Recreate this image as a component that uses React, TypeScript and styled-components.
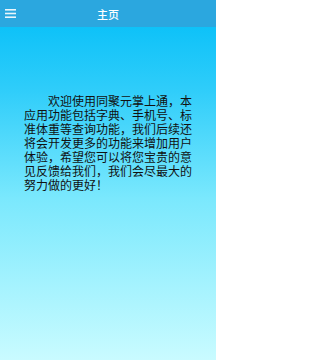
import styled, { createGlobalStyle } from 'styled-components';

const GlobalStyle = createGlobalStyle`
  html, body {
    margin: 0;
    padding: 0;
  }
  body {
    font-family: "Noto Sans CJK SC", "Noto Sans", sans-serif;
  }
`;

const App = () => {
  return (
    <Page>
      <GlobalStyle />
      <TitleBar>
        <MenuButton aria-label="menu">
          <svg width="11" height="9" viewBox="0 0 11 9">
            <rect x="0" y="0" width="11" height="1.6" fill="#eaf6fc" />
            <rect x="0" y="3.7" width="11" height="1.6" fill="#eaf6fc" />
            <rect x="0" y="7.4" width="11" height="1.6" fill="#eaf6fc" />
          </svg>
        </MenuButton>
        <Title>主页</Title>
      </TitleBar>

      <Content>
        <Intro>
          欢迎使用同聚元掌上通，本应用功能包括字典、手机号、标准体重等查询功能，我们后续还将会开发更多的功能来增加用户体验，希望您可以将您宝贵的意见反馈给我们，我们会尽最大的努力做的更好！
        </Intro>
      </Content>
    </Page>
  );
};

export default App;

const Page = styled.div`
  width: 216px;
  height: 360px;
  display: flex;
  flex-direction: column;
  overflow: hidden;
  background: linear-gradient(
    to bottom,
    #00bdf8 0%,
    #2fcdfa 25%,
    #7ae8fd 55%,
    #a6f3fe 80%,
    #c9fbff 100%
  );
`;

const TitleBar = styled.header`
  height: 27px;
  flex-shrink: 0;
  display: flex;
  align-items: center;
  position: relative;
  background-color: #2ba7df;
`;

const MenuButton = styled.div`
  display: flex;
  align-items: center;
  padding-left: 5px;
  height: 100%;
`;

const Title = styled.h1`
  position: absolute;
  left: 0;
  right: 0;
  margin: 0;
  text-align: center;
  font-size: 11px;
  font-weight: 500;
  color: #ffffff;
  pointer-events: none;
`;

const Content = styled.main`
  padding: 67px 24px 0 24px;
`;

const Intro = styled.p`
  margin: 0;
  font-size: 12px;
  line-height: 14px;
  text-indent: 2em;
  color: #111111;
  text-align: justify;
`;
